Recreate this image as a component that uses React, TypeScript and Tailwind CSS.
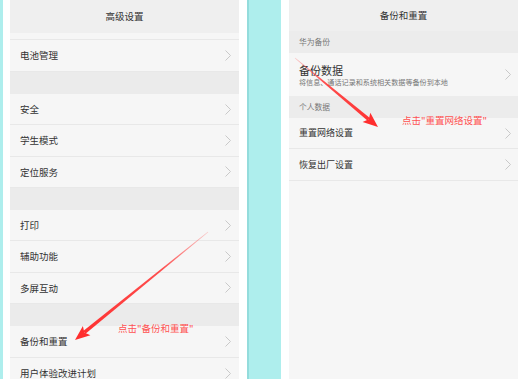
import React from "react";

const FONT = { fontFamily: '"Noto Sans CJK SC", "Noto Sans", sans-serif' };

function Chevron() {
  return (
    <svg width="6" height="11" viewBox="0 0 6 11" fill="none" className="shrink-0">
      <path d="M0.5 0.5L5.5 5.5L0.5 10.5" stroke="#c9c9c9" strokeWidth="1" />
    </svg>
  );
}

function Row({ label, h = "h-[31.33px]" }: { label: string; h?: string }) {
  return (
    <div className={`flex shrink-0 items-center justify-between pl-[10px] pr-[8px] border-b border-[#e8e8e8] ${h}`}>
      <span className="text-[9.5px] text-[#333]">{label}</span>
      <Chevron />
    </div>
  );
}

function Gap() {
  return <div className="h-[22px] shrink-0 bg-[#ebebeb]" />;
}

function SectionTitle({ label }: { label: string }) {
  return (
    <div className="flex h-[22px] shrink-0 items-center bg-[#ececec] pl-[10px]">
      <span className="text-[7.75px] text-[#777]">{label}</span>
    </div>
  );
}

// tapered red arrow, drawn from start (sx,sy) to tip (tx,ty)
function Arrow({ sx, sy, tx, ty, id }: { sx: number; sy: number; tx: number; ty: number; id: string }) {
  const dx = tx - sx;
  const dy = ty - sy;
  const len = Math.sqrt(dx * dx + dy * dy);
  const ux = dx / len;
  const uy = dy / len;
  const nx = -uy;
  const ny = ux;
  const headLen = 15;
  const headW = 6;
  const bx = tx - ux * headLen;
  const by = ty - uy * headLen;
  const p = (x: number, y: number) => `${x.toFixed(1)},${y.toFixed(1)}`;
  const shaft = [
    p(sx + nx * 0.3, sy + ny * 0.3),
    p(bx + ux * 3 + nx * 1.8, by + uy * 3 + ny * 1.8),
    p(bx + ux * 3 - nx * 1.8, by + uy * 3 - ny * 1.8),
    p(sx - nx * 0.3, sy - ny * 0.3),
  ].join(" ");
  const head = [p(tx, ty), p(bx + nx * headW, by + ny * headW), p(bx + ux * 3, by + uy * 3), p(bx - nx * headW, by - ny * headW)].join(" ");
  return (
    <g>
      <defs>
        <linearGradient id={id} gradientUnits="userSpaceOnUse" x1={sx} y1={sy} x2={tx} y2={ty}>
          <stop offset="0" stopColor="#ff3b3b" stopOpacity="0.25" />
          <stop offset="0.35" stopColor="#ff3b3b" stopOpacity="0.9" />
          <stop offset="1" stopColor="#ff2e2e" stopOpacity="1" />
        </linearGradient>
      </defs>
      <polygon points={shaft} fill={`url(#${id})`} />
      <polygon points={head} fill="#ff2e2e" />
    </g>
  );
}

export default function App() {
  return (
    <div className="relative flex h-[379px] w-[518px] overflow-hidden bg-[#aeeeed]" style={FONT}>
      {/* left phone */}
      <div className="ml-[3px] flex h-full bg-white px-[7px] pr-[8px]">
        <div className="flex w-[229px] flex-col overflow-hidden bg-[#f6f6f6]">
          <div className="flex h-[33px] shrink-0 items-center justify-center bg-[#efefef]">
            <span className="text-[9.5px] text-[#333]">高级设置</span>
          </div>
          <div className="h-[7px] shrink-0 border-b border-[#e8e8e8]" />
          <Row label="电池管理" h="h-[32px]" />
          <Gap />
          <Row label="安全" />
          <Row label="学生模式" />
          <Row label="定位服务" />
          <Gap />
          <Row label="打印" />
          <Row label="辅助功能" />
          <Row label="多屏互动" />
          <Gap />
          <Row label="备份和重置" h="h-[32px]" />
          <Row label="用户体验改进计划" />
        </div>
      </div>
      <div className="h-full w-[2px] bg-[#93dcdc]" />

      {/* right phone */}
      <div className="ml-[32px] flex h-full flex-1 bg-white pl-[8px]">
        <div className="flex flex-1 flex-col bg-[#f6f6f6]">
          <div className="flex h-[31px] shrink-0 items-center justify-center bg-[#efefef]">
            <span className="text-[9.5px] text-[#333]">备份和重置</span>
          </div>
          <SectionTitle label="华为备份" />
          <div className="flex h-[43px] shrink-0 items-center justify-between pl-[10px] pr-[7px]">
            <div className="flex flex-col">
              <span className="text-[11px] leading-[14px] text-[#333]">备份数据</span>
              <span className="text-[7.1px] leading-[10px] text-[#777]">将信息、通话记录和系统相关数据等备份到本地</span>
            </div>
            <Chevron />
          </div>
          <SectionTitle label="个人数据" />
          <div className="flex h-[31px] shrink-0 items-center justify-between border-b border-[#e8e8e8] pl-[10px] pr-[7px]">
            <span className="text-[9px] text-[#333]">重置网络设置</span>
            <Chevron />
          </div>
          <div className="flex h-[32px] shrink-0 items-center justify-between border-b border-[#e8e8e8] pl-[10px] pr-[7px]">
            <span className="text-[9px] text-[#333]">恢复出厂设置</span>
            <Chevron />
          </div>
        </div>
      </div>

      {/* annotations */}
      <span className="absolute left-[118px] top-[321px] text-[9.5px] leading-[14px] text-[#ff5252]">点击"备份和重置"</span>
      <span className="absolute left-[402px] top-[113px] text-[9.5px] leading-[14px] text-[#ff5252]">点击"重置网络设置"</span>
      <svg className="pointer-events-none absolute left-0 top-0" width="518" height="379">
        <Arrow id="a1" sx={208} sy={232} tx={75} ty={340} />
        <Arrow id="a2" sx={295} sy={58} tx={378} ty={127} />
      </svg>
    </div>
  );
}
